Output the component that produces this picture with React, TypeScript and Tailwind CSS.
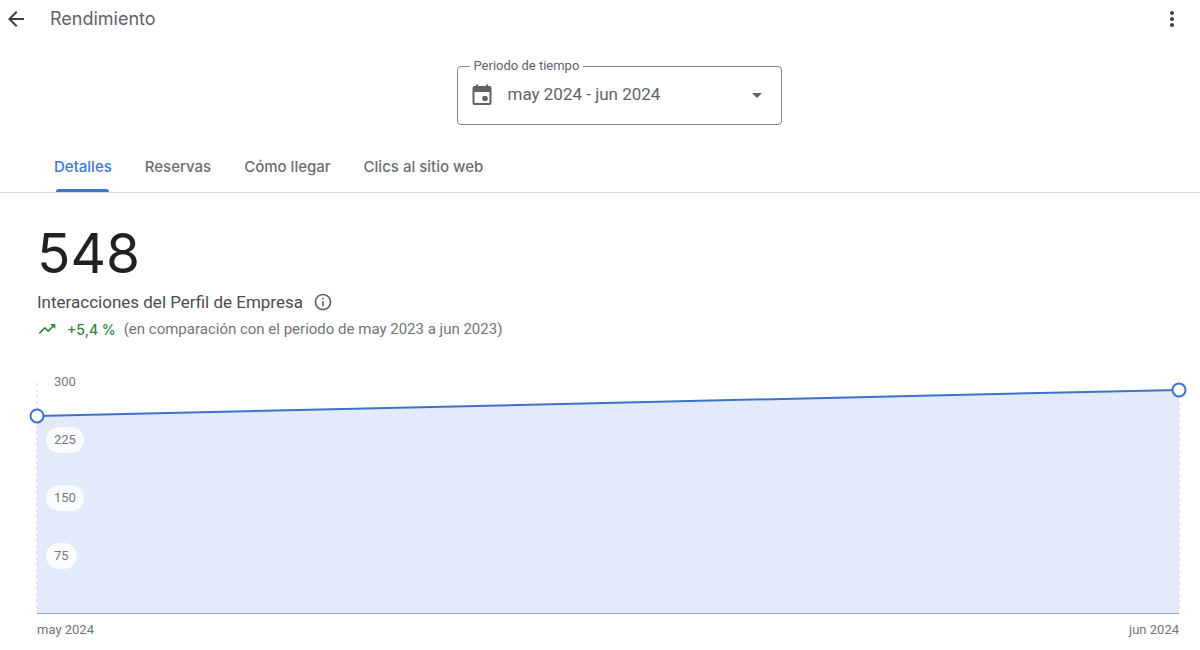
import { useState } from 'react';
import { MdArrowBack, MdArrowDropDown, MdInfoOutline, MdMoreVert, MdTrendingUp } from 'react-icons/md';

interface Point {
    label: string;
    value: number;
}

const TABS = ['Detalles', 'Reservas', 'Cómo llegar', 'Clics al sitio web'];

const POINTS: Point[] = [
    { label: 'may 2024', value: 257 },
    { label: 'jun 2024', value: 291 },
];

const MAX = 300;
const TICKS = [300, 225, 150, 75];

function CalendarIcon() {
    return (
        <svg viewBox="0 0 24 24" className="size-6" fill="#5f6368" aria-hidden="true">
            <path
                fillRule="evenodd"
                d="M6 1.5h2V3h8V1.5h2V3h1.5a2 2 0 0 1 2 2v15a2 2 0 0 1-2 2h-15a2 2 0 0 1-2-2V5a2 2 0 0 1 2-2H6zM4.5 9v11h15V9z"
            />
            <circle cx="15" cy="15.5" r="2.8" />
        </svg>
    );
}

function Header() {
    return (
        <header className="flex h-[38px] items-center justify-between pl-1 pr-4">
            <div className="flex items-center gap-[22px]">
                <button type="button" aria-label="Atrás" className="text-[#3c4043]">
                    <MdArrowBack className="size-6" />
                </button>
                <h1 className="font-['Inter','Roboto',sans-serif] text-[18px] leading-6 text-[#5f6368]">Rendimiento</h1>
            </div>
            <button type="button" aria-label="Más opciones" className="text-[#3c4043]">
                <MdMoreVert className="size-6" />
            </button>
        </header>
    );
}

function PeriodSelect() {
    return (
        <div className="flex justify-center pl-[38px] pt-[19px]">
            <fieldset className="h-[68px] w-[325px] rounded border border-[#80868b] px-3">
                <legend className="px-1 text-[13px] leading-[18px] text-[#5f6368]">
                    <label htmlFor="periodo">Periodo de tiempo</label>
                </legend>
                <div className="flex h-10 items-center">
                    <CalendarIcon />
                    <select
                        id="periodo"
                        className="ml-[14px] h-10 flex-1 appearance-none bg-transparent text-[17px] text-[#5f6368] outline-none"
                    >
                        <option>may 2024 - jun 2024</option>
                    </select>
                    <MdArrowDropDown className="pointer-events-none size-6 text-[#5f6368]" />
                </div>
            </fieldset>
        </div>
    );
}

function Tabs() {
    const [active, setActive] = useState(TABS[0]);

    return (
        <nav role="tablist" className="mt-4 flex h-[52px] gap-[33px] border-b border-[#dadce0] pl-[54px] font-['Inter','Roboto',sans-serif]">
            {TABS.map((tab) => (
                <button
                    key={tab}
                    type="button"
                    role="tab"
                    aria-selected={tab === active}
                    onClick={() => setActive(tab)}
                    className={`flex flex-col items-center justify-between pt-4 text-[15px] leading-5 font-medium ${
                        tab === active ? 'text-[#3c78d8]' : 'text-[#6a6e73]'
                    }`}
                >
                    {tab}
                    <span className={`block h-[3px] w-[53px] rounded-t ${tab === active ? 'bg-[#3b73d1]' : 'bg-transparent'}`} />
                </button>
            ))}
        </nav>
    );
}

function Summary() {
    return (
        <section className="px-[37px] pt-7">
            <p className="font-['Inter','Roboto',sans-serif] text-[55px] leading-[64px] text-[#202124]">548</p>
            <div className="mt-1 flex h-[26px] items-center gap-[10px]">
                <h2 className="text-[17px] leading-6 text-[#4a4d51]">Interacciones del Perfil de Empresa</h2>
                <button type="button" aria-label="Más información" className="text-[#5f6368]">
                    <MdInfoOutline className="size-5" />
                </button>
            </div>
            <p className="mt-[2px] flex h-6 items-center text-[15px] text-[#70757a]">
                <MdTrendingUp className="size-5 text-[#2f8440]" />
                <span className="ml-[10px] font-['Inter','Roboto',sans-serif] text-[14px] font-medium text-[#2f8440]">+5,4 %</span>
                <span className="ml-2">(en comparación con el periodo de may 2023 a jun 2023)</span>
            </p>
        </section>
    );
}

function Chart() {
    const y = (value: number) => 100 - (value / MAX) * 100;
    const [first, last] = POINTS;

    return (
        <figure className="pl-[37px] pr-[21px] pt-[42px]">
            <div className="relative h-[231px] border-b border-[#9aa5b5]">
                <svg className="block h-full w-full overflow-visible">
                    <svg viewBox="0 0 100 100" preserveAspectRatio="none" width="100%" height="100%">
                        <polygon points={`0,${y(first.value)} 100,${y(last.value)} 100,100 0,100`} fill="#e3eafb" />
                    </svg>
                    <line x1="0" y1="0" x2="0" y2="100%" stroke="#d3d6dc" strokeDasharray="3 3" />
                    <line x1="100%" y1={`${y(last.value)}%`} x2="100%" y2="100%" stroke="#d3d6dc" strokeDasharray="3 3" />
                    <line
                        x1="0"
                        y1={`${y(first.value)}%`}
                        x2="100%"
                        y2={`${y(last.value)}%`}
                        stroke="#3b73cb"
                        strokeWidth="2"
                    />
                    {POINTS.map((point, i) => (
                        <circle
                            key={point.label}
                            cx={`${i * 100}%`}
                            cy={`${y(point.value)}%`}
                            r="6.5"
                            fill="#fff"
                            stroke="#3b73d6"
                            strokeWidth="2"
                        />
                    ))}
                </svg>
                {/* etiquetas del eje Y, encima del área */}
                <ul className="absolute -top-[14px] left-[9px] flex flex-col items-start gap-8 text-[13px] leading-[26px] text-[#757a80]">
                    {TICKS.map((tick) => (
                        <li key={tick} className="rounded-full bg-white/80 px-2">
                            {tick}
                        </li>
                    ))}
                </ul>
            </div>
            <figcaption className="flex justify-between pt-2 text-[13px] leading-4 text-[#70757a]">
                {POINTS.map((point) => (
                    <span key={point.label}>{point.label}</span>
                ))}
            </figcaption>
        </figure>
    );
}

export default function App() {
    return (
        <main className="min-h-screen bg-white font-['Roboto',sans-serif]">
            <Header />
            <PeriodSelect />
            <Tabs />
            <Summary />
            <Chart />
        </main>
    );
}
